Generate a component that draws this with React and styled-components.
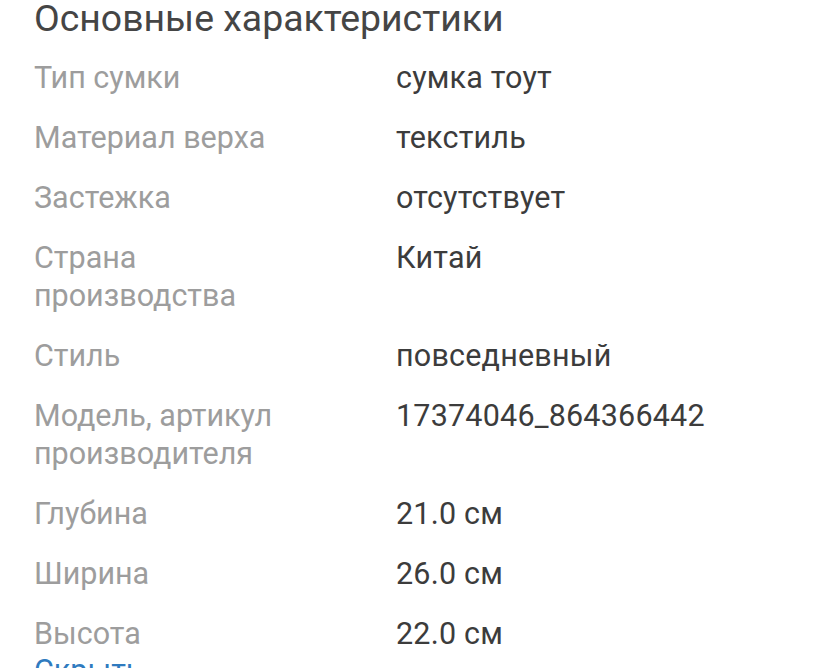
import React from 'react';
import styled, { createGlobalStyle } from 'styled-components';

const GlobalStyle = createGlobalStyle`
  body {
    margin: 0;
    background: #ffffff;
    font-family: Roboto, "Noto Sans", Arial, sans-serif;
    overflow: hidden;
  }
`;

const Section = styled.section`
  padding: 0 0 0 34px;
  width: 828px;
  height: 668px;
  box-sizing: border-box;
  overflow: hidden;
`;

const Title = styled.h2`
  margin: 0;
  font-size: 37.4px;
  font-weight: 400;
  line-height: 36px;
  color: #454545;
`;

const List = styled.dl`
  margin: 23px 0 0;
  display: flex;
  flex-direction: column;
  gap: 22px;
`;

const Row = styled.div`
  display: grid;
  grid-template-columns: 362px 1fr;
  font-size: 30.5px;
  line-height: 38px;
`;

const Label = styled.dt`
  margin: 0;
  color: #9d9d9d;
  max-width: 300px;
`;

const Value = styled.dd`
  margin: 0;
  color: #3c3c3c;
  letter-spacing: 0.2px;
`;

const ToggleLink = styled.a`
  display: block;
  margin-top: -1px;
  font-size: 30.5px;
  line-height: 38px;
  color: #2f7bbf;
  text-decoration: none;
`;

const specs = [
  ['Тип сумки', 'сумка тоут'],
  ['Материал верха', 'текстиль'],
  ['Застежка', 'отсутствует'],
  ['Страна производства', 'Китай'],
  ['Стиль', 'повседневный'],
  ['Модель, артикул производителя', '17374046_864366442'],
  ['Глубина', '21.0 см'],
  ['Ширина', '26.0 см'],
  ['Высота', '22.0 см'],
];

export default function App() {
  return (
    <>
      <GlobalStyle />
      <Section>
        <Title>Основные характеристики</Title>
        <List>
          {specs.map(([label, value]) => (
            <Row key={label}>
              <Label>{label}</Label>
              <Value>{value}</Value>
            </Row>
          ))}
        </List>
        <ToggleLink href="#">Скрыть</ToggleLink>
      </Section>
    </>
  );
}
